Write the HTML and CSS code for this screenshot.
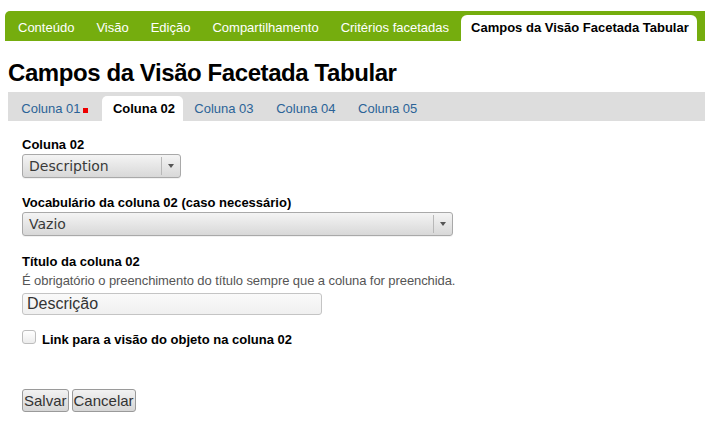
FILE: index.html
```html
<!DOCTYPE html>
<html>
<head>
<meta charset="utf-8">
<link rel="stylesheet" href="styles.css">
</head>
<body>
<nav class="topnav">
  <a class="tab">Conteúdo</a>
  <a class="tab">Visão</a>
  <a class="tab">Edição</a>
  <a class="tab">Compartilhamento</a>
  <a class="tab">Critérios facetadas</a>
  <a class="tab active">Campos da Visão Facetada Tabular</a>
</nav>
<h1 class="title">Campos da Visão Facetada Tabular</h1>
<nav class="subnav">
  <a class="subtab">Coluna 01<span class="flag"></span></a>
  <a class="subtab active">Coluna 02</a>
  <a class="subtab">Coluna 03</a>
  <a class="subtab">Coluna 04</a>
  <a class="subtab">Coluna 05</a>
</nav>
<form class="form">
  <div class="field f1">
    <label class="label">Coluna 02</label>
    <div class="select small"><span class="value">Description</span><span class="arrow"></span></div>
  </div>
  <div class="field f2">
    <label class="label">Vocabulário da coluna 02 (caso necessário)</label>
    <div class="select wide"><span class="value">Vazio</span><span class="arrow"></span></div>
  </div>
  <div class="field f3">
    <label class="label">Título da coluna 02</label>
    <div class="help">É obrigatório o preenchimento do título sempre que a coluna for preenchida.</div>
    <div class="input">Descrição</div>
  </div>
  <div class="field check">
    <span class="box"></span>
    <label class="label">Link para a visão do objeto na coluna 02</label>
  </div>
  <div class="buttons">
    <span class="btn">Salvar</span><span class="btn">Cancelar</span>
  </div>
</form>
</body>
</html>
```

FILE: styles.css
```css
html, body { margin: 0; padding: 0; background: #fff; }
body { font-family: "Liberation Sans", Arial, sans-serif; font-size: 13px; color: #000; }

.topnav {
  margin: 11px 0 0 5px;
  height: 30px;
  background: #75ad0e;
  border-radius: 5px 0 0 0;
  display: flex;
  align-items: flex-end;
  padding-left: 2px;
}
.tab {
  color: #fff;
  padding: 0 11px;
  height: 26px;
  line-height: 26px;
  white-space: nowrap;
}
.tab.active {
  background: #fff;
  color: #000;
  font-weight: bold;
  border-radius: 6px 6px 0 0;
  padding: 0 8px 0 10px;
  margin-left: 1px;
}

.title {
  margin: 17px 0 0 8px;
  font-size: 24px;
  line-height: 30px;
  font-weight: bold;
  letter-spacing: -0.42px;
}

.subnav {
  margin: 4px 0 0 8px;
  height: 29px;
  background: #dddddd;
  display: flex;
  align-items: flex-end;
  padding-left: 2px;
}
.subtab {
  color: #2b6397;
  padding: 0 11.3px;
  height: 25px;
  line-height: 23px;
  white-space: nowrap;
  display: flex;
  align-items: center;
}
.subtab.active {
  background: #fff;
  color: #000;
  font-weight: bold;
  border-radius: 5px 5px 0 0;
  padding: 0 8px 0 11px;
}
.flag {
  width: 5px;
  height: 5px;
  background: #ee0000;
  margin: 3px 3px 0 2px;
}

.form { margin: 0 0 0 22px; }
.field { display: flex; flex-direction: column; align-items: flex-start; }
.label { font-weight: bold; line-height: 16px; }
.f1 { margin-top: 16px; }
.f1 .label { margin-bottom: 1px; }
.f2 { margin-top: 17px; }
.f2 .label { margin-bottom: 1px; }
.f3 { margin-top: 18px; }

.select {
  height: 22px;
  border: 1px solid #a9a9a9;
  border-radius: 3px;
  background: linear-gradient(#f4f4f4, #d8d8d8);
  display: flex;
  align-items: center;
  font-family: "DejaVu Sans", sans-serif;
  font-size: 14px;
  color: #3a3a3a;
  box-shadow: 0 1px 0 rgba(0,0,0,0.05);
}
.select .value { flex: 1; padding-left: 6px; }
.select .arrow {
  width: 18px;
  height: 18px;
  border-left: 1px solid #b8b8b8;
  position: relative;
}
.select .arrow::after {
  content: "";
  position: absolute;
  left: 6px;
  top: 7px;
  border-left: 3px solid transparent;
  border-right: 3px solid transparent;
  border-top: 4px solid #555;
}
.small { width: 157px; }
.wide { width: 429px; }

.help { color: #555; line-height: 16px; margin-top: 3px; letter-spacing: -0.08px; }
.input {
  margin-top: 4px;
  width: 294px;
  height: 20px;
  line-height: 20px;
  border: 1px solid #c4c4c4;
  border-radius: 3px;
  background: linear-gradient(#fafafa, #f0f0f0);
  font-size: 16px;
  color: #333;
  padding-left: 4px;
}

.check {
  flex-direction: row;
  align-items: flex-start;
  margin-top: 15px;
}
.box {
  width: 12px;
  height: 12px;
  border: 1px solid #bdbdbd;
  border-radius: 3px;
  background: linear-gradient(#fff, #ececec);
  margin-right: 6px;
}
.check .label { margin-top: 2px; }

.buttons { margin-top: 41px; display: flex; gap: 3px; }
.btn {
  height: 21px;
  line-height: 21px;
  border: 1px solid #9a9a9a;
  border-radius: 3px;
  background: linear-gradient(#f2f2f2, #d6d6d6);
  font-size: 15px;
  color: #333;
  padding: 0 1px;
}
```
